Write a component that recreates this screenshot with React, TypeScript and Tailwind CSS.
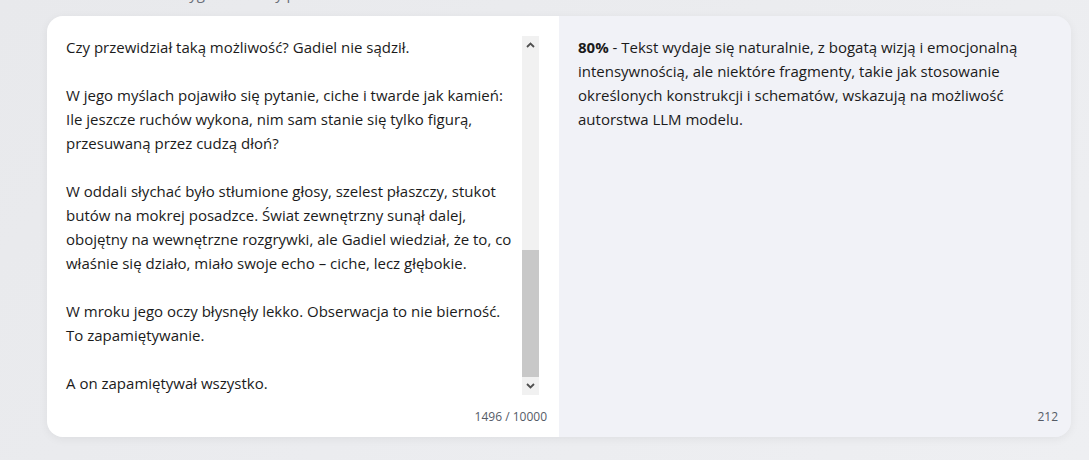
const leftLines = [
  "Czy przewidział taką możliwość? Gadiel nie sądził.",
  "",
  "W jego myślach pojawiło się pytanie, ciche i twarde jak kamień:",
  "Ile jeszcze ruchów wykona, nim sam stanie się tylko figurą,",
  "przesuwaną przez cudzą dłoń?",
  "",
  "W oddali słychać było stłumione głosy, szelest płaszczy, stukot",
  "butów na mokrej posadzce. Świat zewnętrzny sunął dalej,",
  "obojętny na wewnętrzne rozgrywki, ale Gadiel wiedział, że to, co",
  "właśnie się działo, miało swoje echo – ciche, lecz głębokie.",
  "",
  "W mroku jego oczy błysnęły lekko. Obserwacja to nie bierność.",
  "To zapamiętywanie.",
  "",
  "A on zapamiętywał wszystko.",
]

const rightLines = [
  "Tekst wydaje się naturalnie, z bogatą wizją i emocjonalną",
  "intensywnością, ale niektóre fragmenty, takie jak stosowanie",
  "określonych konstrukcji i schematów, wskazują na możliwość",
  "autorstwa LLM modelu.",
]

function Scrollbar() {
  return (
    <div className="mt-[1px] flex h-[359px] w-[17px] shrink-0 flex-col bg-[#f1f1f1]">
      <div className="flex h-[17px] items-center justify-center">
        <svg width="9" height="6" viewBox="0 0 9 6">
          <path d="M1 5 L4.5 1.5 L8 5" fill="none" stroke="#505050" strokeWidth="1.8" />
        </svg>
      </div>
      <div className="flex-1" />
      <div className="h-[127px] bg-[#c8c8c8]" />
      <div className="flex h-[18px] items-center justify-center">
        <svg width="9" height="6" viewBox="0 0 9 6">
          <path d="M1 1 L4.5 4.5 L8 1" fill="none" stroke="#505050" strokeWidth="1.8" />
        </svg>
      </div>
    </div>
  )
}

export default function App() {
  return (
    <div
      className="min-h-[460px] w-full overflow-hidden bg-[linear-gradient(135deg,#e8e9ec,#eeeff2)] text-[#1b1b1b]"
      style={{ fontFamily: '"Open Sans", "Noto Sans", sans-serif' }}
    >
      <p className="ml-[92px] mt-[-17px] h-[20px] text-[15px] leading-[20px] text-[#6b707a]">
        Tekst został wygenerowany przez AI
      </p>
      <div className="ml-[47px] mt-[13px] grid h-[421px] w-[1024px] grid-cols-2 overflow-hidden rounded-[16px] shadow-[0_2px_10px_rgba(0,0,0,0.06)]">
        <div className="flex flex-col bg-white pl-[19px] pr-[12px] pt-[19px] pb-[12px]">
          <div className="flex pr-[8px]">
            <div className="flex-1 text-[15px] leading-[24px]">
              {leftLines.map((l, i) => (
                <div key={i} className="h-[24px] whitespace-nowrap">
                  {l}
                </div>
              ))}
            </div>
            <Scrollbar />
          </div>
          <div className="mt-[14px] text-right text-[12px] leading-[16px] text-[#555b66]">1496 / 10000</div>
        </div>
        <div className="flex flex-col bg-[#f1f2f7] pl-[19px] pr-[13px] pt-[19px] pb-[12px]">
          <div className="flex-1 text-[15px] leading-[24px]">
            {rightLines.map((l, i) => (
              <div key={i} className="whitespace-nowrap">
                {i === 0 && <span className="font-bold">80%</span>}
                {i === 0 ? " - " + l : l}
              </div>
            ))}
          </div>
          <div className="text-right text-[12px] leading-[16px] text-[#555b66]">212</div>
        </div>
      </div>
    </div>
  )
}
